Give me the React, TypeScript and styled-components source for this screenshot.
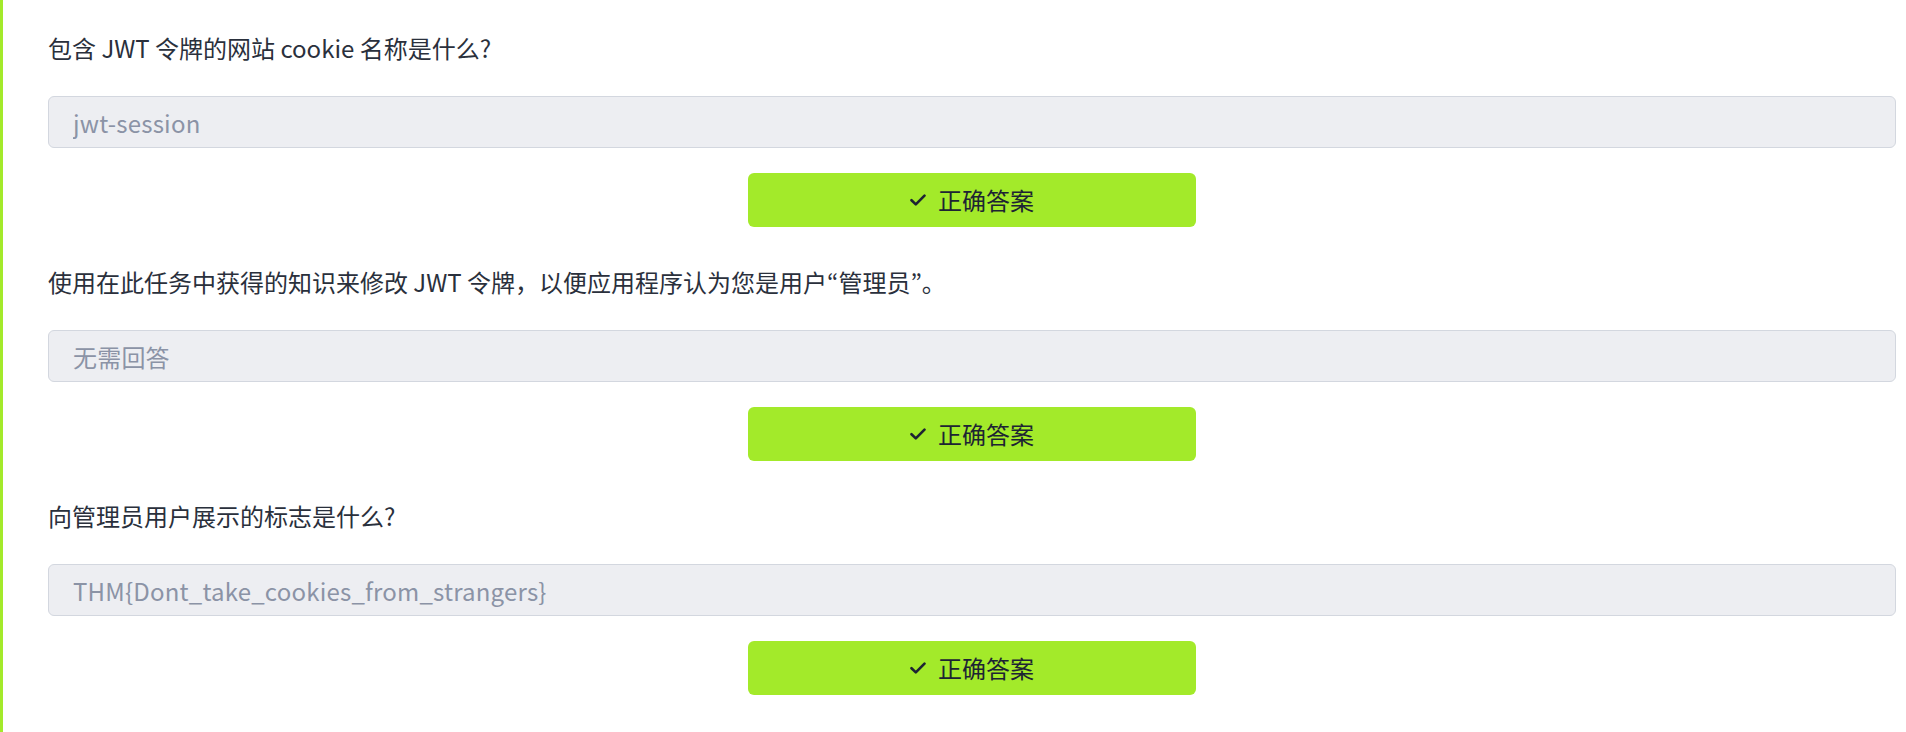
import React from "react";
import styled, { createGlobalStyle } from "styled-components";

const GlobalStyle = createGlobalStyle`
  html, body {
    margin: 0;
    padding: 0;
    background: #ffffff;
  }
  body {
    font-family: "Noto Sans CJK SC", "Noto Sans", sans-serif;
    color: #2a303c;
  }
  * {
    box-sizing: border-box;
  }
`;

const Page = styled.main`
  min-height: 100vh;
  border-left: 3px solid #a3ea2a;
  padding: 30px 10px 36px 45px;
  display: flex;
  flex-direction: column;
  gap: 37px;
`;

const QuestionBlock = styled.section`
  display: flex;
  flex-direction: column;
`;

const Question = styled.p`
  margin: 0 0 30px;
  font-size: 24px;
  line-height: 36px;
  font-weight: 400;
  color: #2a303c;
`;

const QuoteMark = styled.span`
  font-family: "Noto Sans CJK JP", "Noto Sans", sans-serif;
`;

const AnswerField = styled.input`
  width: 100%;
  height: 52px;
  margin: 0 0 25px;
  padding: 0 24px;
  border: 1px solid #d3d7df;
  border-radius: 6px;
  background: #edeef2;
  font-family: "Noto Sans CJK SC", "Noto Sans", sans-serif;
  font-size: 24px;
  letter-spacing: 0.2px;
  color: #8b93a6;
  outline: none;
  &::placeholder {
    color: #8b93a6;
    opacity: 1;
  }
`;

const SubmitButton = styled.button`
  align-self: center;
  width: 448px;
  height: 54px;
  border: none;
  border-radius: 6px;
  background: #a3ea2a;
  color: #1d2433;
  display: flex;
  align-items: center;
  justify-content: center;
  gap: 12px;
  font-family: "Noto Sans CJK SC", "Noto Sans", sans-serif;
  font-size: 24px;
  line-height: 1;
  cursor: pointer;
  padding: 0;
`;

const CheckIcon = () => (
  <svg width="16" height="12" viewBox="0 0 16 12" fill="none" aria-hidden="true">
    <path
      d="M1.5 6.2 L5.8 10.4 L14.5 1.6"
      stroke="#1d2433"
      strokeWidth="2.6"
      strokeLinecap="round"
      strokeLinejoin="round"
    />
  </svg>
);

type Item = { id: string; question: React.ReactNode; answer: string };

const items: Item[] = [
  { id: "q1", question: "包含 JWT 令牌的网站 cookie 名称是什么?", answer: "jwt-session" },
  {
    id: "q2",
    question: (
      <>
        使用在此任务中获得的知识来修改 JWT 令牌，以便应用程序认为您是用户
        <QuoteMark>“</QuoteMark>管理员<QuoteMark>”</QuoteMark>。
      </>
    ),
    answer: "无需回答",
  },
  { id: "q3", question: "向管理员用户展示的标志是什么?", answer: "THM{Dont_take_cookies_from_strangers}" },
];

export default function App() {
  return (
    <>
      <GlobalStyle />
      <Page>
        {items.map((item) => (
          <QuestionBlock key={item.id}>
            <Question>{item.question}</Question>
            <AnswerField readOnly value={item.answer} />
            <SubmitButton type="button">
              <CheckIcon />
              正确答案
            </SubmitButton>
          </QuestionBlock>
        ))}
      </Page>
    </>
  );
}
